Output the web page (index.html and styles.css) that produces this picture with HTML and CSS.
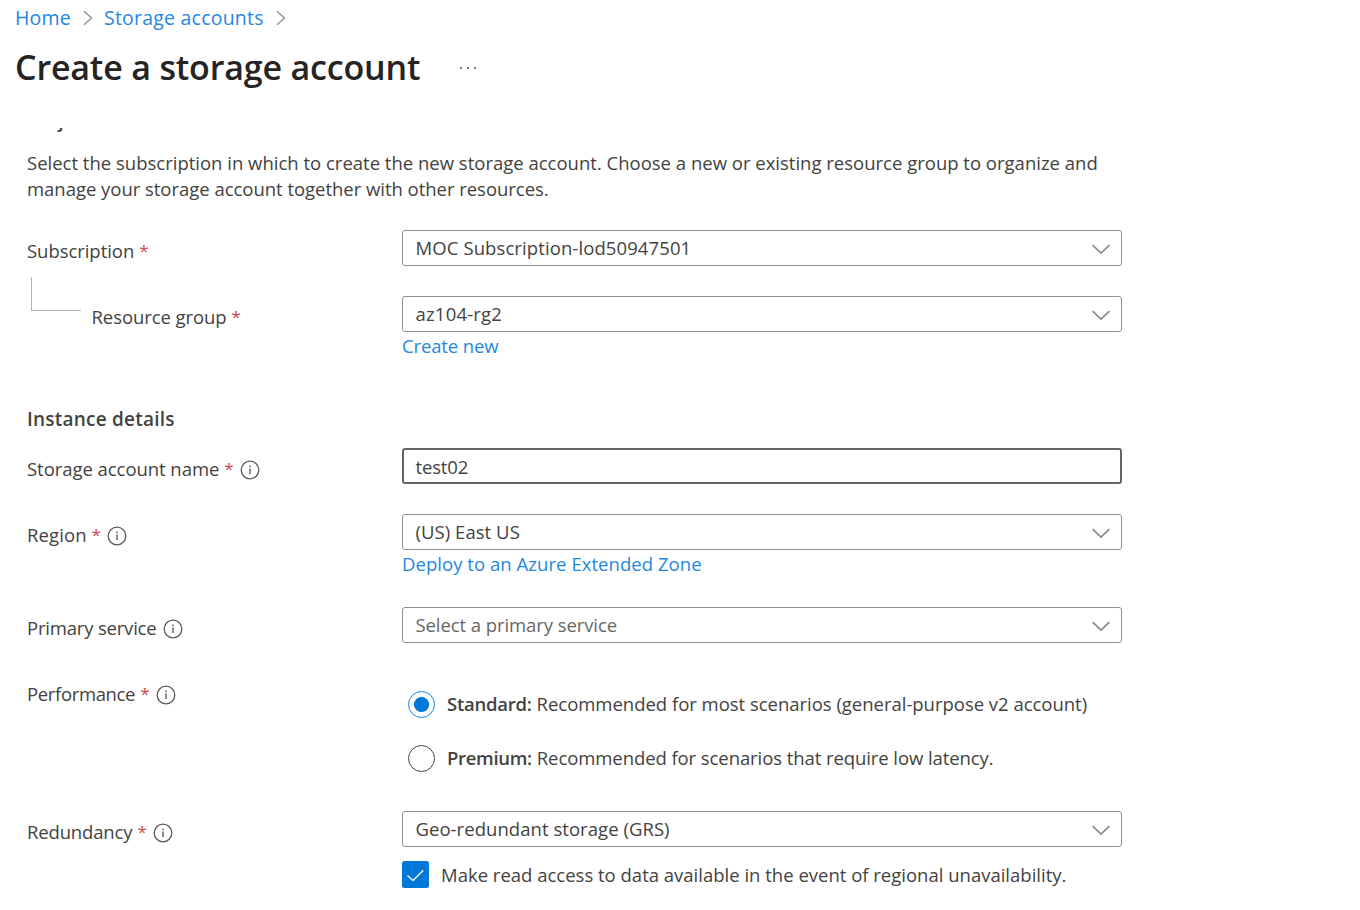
FILE: index.html
```html
<!DOCTYPE html>
<html lang="en"><head><meta charset="utf-8"><title>Create a storage account</title><link rel="stylesheet" href="styles.css"></head>
<body>
<svg width="0" height="0" class="defs"><defs>
<symbol id="chev" viewBox="0 0 20 12"><path d="M1.6 1.2 10 9 18.4 1.2" fill="none" stroke="#8d8888" stroke-width="1.7"/></symbol>
<symbol id="crumb" viewBox="0 0 10 16"><path d="M1 1.2 8.5 8 1 14.8" fill="none" stroke="#8f8d8b" stroke-width="1.3"/></symbol>
<symbol id="info" viewBox="0 0 20 20"><circle cx="10" cy="10" r="8.8" fill="none" stroke="#5c5a58" stroke-width="1.3"/><path d="M10 8.6V14" stroke="#5c5a58" stroke-width="1.4"/><circle cx="10" cy="6.3" r=".9" fill="#5c5a58"/></symbol>
</defs></svg>
<nav class="crumbs"><a class="t-home">Home</a><svg class="sep"><use href="#crumb"/></svg><a class="t-sa">Storage accounts</a><svg class="sep last"><use href="#crumb"/></svg></nav>
<header class="head"><h1 class="t-title">Create a storage account</h1><svg class="more" viewBox="0 0 18 4"><g fill="#777"><rect x="1" y="1" width="2" height="2"/><rect x="8" y="1" width="2" height="2"/><rect x="15" y="1" width="2" height="2"/></g></svg></header>
<main class="form">
<div class="clip"><h2>Project details</h2></div>
<p class="intro"><span class="t-p1">Select the subscription in which to create the new storage account. Choose a new or existing resource group to organize and</span><br><span class="t-p2">manage your storage account together with other resources.</span></p>
<div class="row sub"><label><span class="t-sub">Subscription</span><b class="req">*</b></label><div class="field"><div class="box"><span class="t-moc">MOC Subscription-lod50947501</span><svg class="chev"><use href="#chev"/></svg></div></div></div>
<div class="row rg"><label class="nested"><i class="elbow"></i><span class="t-rg">Resource group</span><b class="req">*</b></label><div class="field"><div class="box"><span class="t-az">az104-rg2</span><svg class="chev"><use href="#chev"/></svg></div><a class="t-new">Create new</a></div></div>
<h2 class="section"><span class="t-inst">Instance details</span></h2>
<div class="row name"><label><span class="t-name">Storage account name</span><b class="req">*</b><svg class="info"><use href="#info"/></svg></label><div class="field"><div class="box focus"><span class="t-test">test02</span></div></div></div>
<div class="row region"><label><span class="t-reg">Region</span><b class="req">*</b><svg class="info"><use href="#info"/></svg></label><div class="field"><div class="box"><span class="t-us">(US) East US</span><svg class="chev"><use href="#chev"/></svg></div><a class="t-dep">Deploy to an Azure Extended Zone</a></div></div>
<div class="row prim"><label><span class="t-prim">Primary service</span><svg class="info"><use href="#info"/></svg></label><div class="field"><div class="box hint"><span class="t-sel">Select a primary service</span><svg class="chev"><use href="#chev"/></svg></div></div></div>
<div class="row perf"><label><span class="t-perf">Performance</span><b class="req">*</b><svg class="info"><use href="#info"/></svg></label><div class="field radios">
<div class="radio"><i class="dot on"></i><strong class="t-std">Standard:</strong><span class="t-r1">Recommended for most scenarios (general-purpose v2 account)</span></div>
<div class="radio"><i class="dot"></i><strong class="t-pre">Premium:</strong><span class="t-r2">Recommended for scenarios that require low latency.</span></div></div></div>
<div class="row red"><label><span class="t-red">Redundancy</span><b class="req">*</b><svg class="info"><use href="#info"/></svg></label><div class="field"><div class="box"><span class="t-geo">Geo-redundant storage (GRS)</span><svg class="chev"><use href="#chev"/></svg></div>
<div class="check"><svg class="tick" viewBox="0 0 27 27"><rect width="27" height="27" rx="2.5" fill="#0078d8"/><path d="M5.5 14.5 11 19.5 21.3 9.3" fill="none" stroke="#e4f2fd" stroke-width="1.5"/></svg><span class="t-make">Make read access to data available in the event of regional unavailability.</span></div></div></div>
</main>
</body></html>
```
FILE: styles.css
```css
*{box-sizing:border-box}
body{margin:0;width:1360px;height:910px;overflow:hidden;background:#fff;color:#444240;font:18.5px/24px "Open Sans","Noto Sans",sans-serif;white-space:nowrap}
svg{display:block;flex:none}
.defs{position:absolute}
a{color:#1f88e0}
h1,h2{margin:0;font-weight:600}
.crumbs{display:flex;height:36px;padding:6px 0 0 15px;font-size:19.5px}
.sep{width:10px;height:16px;margin:4px 11px 0 12px}
.head{display:flex;height:92px;padding:7px 0 0 15px}
.t-title{font-size:34px;line-height:48px;letter-spacing:-.17px;color:#252423}
.more{width:18px;height:4px;margin:23px 0 0 39px}
.form{padding-left:27px}
.clip{height:23px;overflow:hidden}
.clip h2{margin-top:-19px;font-size:18.5px;letter-spacing:.3px}
.intro{margin:-1px 0 0;height:80px;line-height:25.5px}
.row{display:grid;grid-template-columns:375px 720px;height:66px}
.row label{display:flex;padding-top:9px}
.req{margin-left:5px;color:#cf4550;font-weight:400;font-size:17px}
.info{width:20px;height:20px;margin:3px 0 0 6px}
.prim .info{margin-left:7px}
.box{display:flex;justify-content:space-between;height:36px;border:1px solid #92908e;border-radius:3px;padding:5px 10px 0 12.5px;margin-bottom:2px}
.focus{border:2px solid #6a6360;padding:5px 9px 0 11.5px}
.hint{color:#686664}
.chev{width:20px;height:12px;margin-top:8px}
.rg{height:111px}
.nested{align-items:flex-start}
.elbow{width:50px;height:34px;margin:-28px 10.5px 0 4px;border:solid #b5b3b1;border-width:0 0 1.5px 1.5px}
.section{height:41px;font-size:19px}
.region{height:93px}
.perf{height:138px}
.radios{padding-top:4px}
.radio{display:flex;align-items:center;height:54px;padding-left:6px}
.dot{width:27px;height:27px;border:1.5px solid #444;border-radius:50%;margin-right:12px}
.on{border-color:#1583df;background:radial-gradient(circle,#0078d8 7px,#fff 8px)}
.radio strong{font-weight:600;margin-right:5px}
.check{display:flex;margin-top:14px;gap:12px}
.tick{width:27px;height:27px}
.t-home,.t-sa{letter-spacing:.22px}
.t-p2{letter-spacing:-.03px}
.t-sub,.t-rg,.t-name{letter-spacing:-.05px}
.t-rg{letter-spacing:-.08px}
.t-moc{letter-spacing:.1px}
.t-az{letter-spacing:.2px}
.t-new{letter-spacing:-.13px}
.t-inst{letter-spacing:.22px}
.t-test{letter-spacing:-.15px}
.t-us,.t-dep,.t-geo{letter-spacing:.05px}
.t-reg{letter-spacing:.1px}
.t-prim{letter-spacing:-.19px}
.t-sel{letter-spacing:-.08px}
.t-perf{letter-spacing:-.35px}
.t-std{letter-spacing:-.25px}
.t-pre{letter-spacing:-.32px}
.t-r1{letter-spacing:-.02px}
.t-r2{letter-spacing:-.08px}
.t-red{letter-spacing:-.15px}
.t-make{padding-top:2px}
```
